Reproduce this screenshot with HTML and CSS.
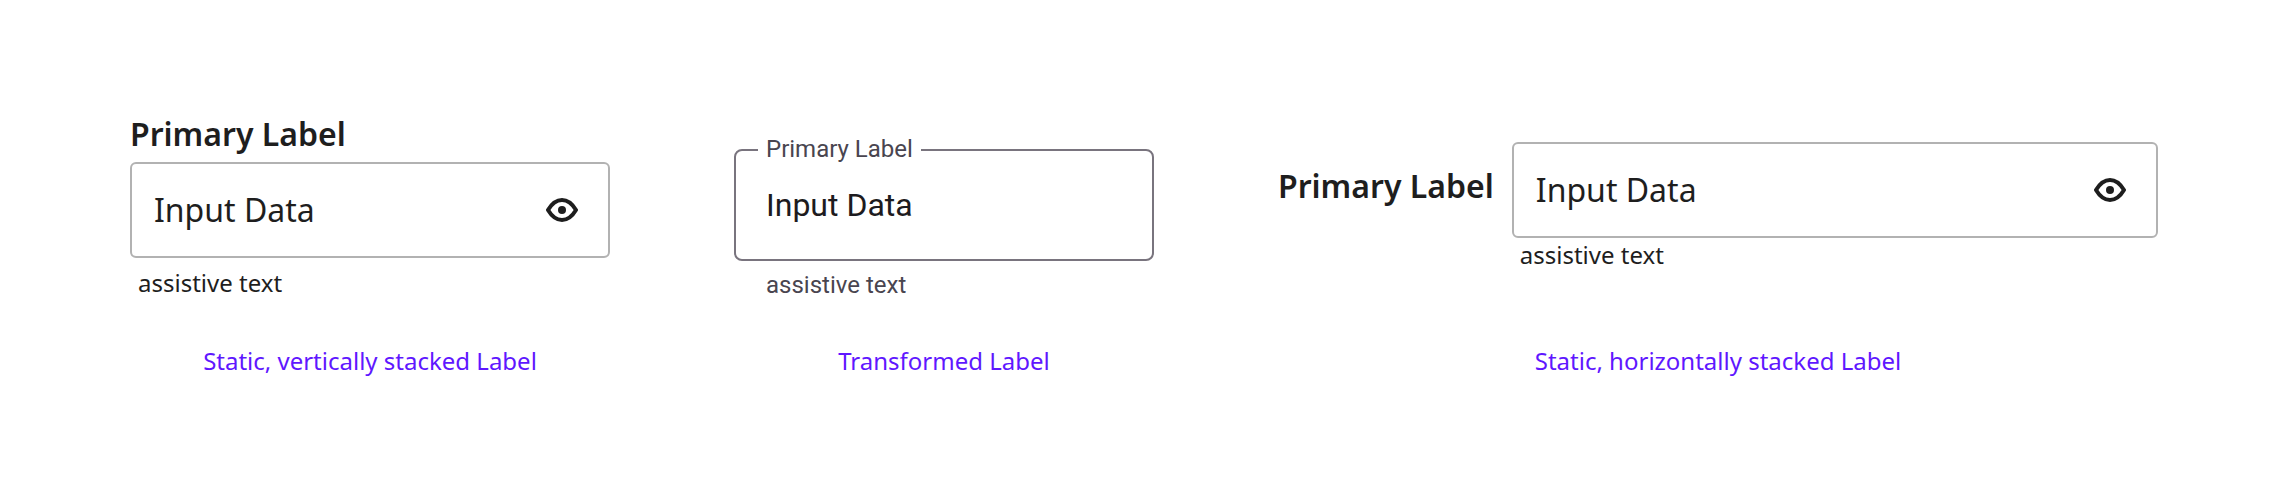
FILE: index.html
```html
<!DOCTYPE html>
<html lang="en">
<head>
<meta charset="utf-8">
<title>Text field labels</title>
<link rel="stylesheet" href="styles.css">
</head>
<body>
<main class="examples">
  <figure class="example">
    <div class="field field-stacked">
      <label class="label" for="stacked">Primary Label</label>
      <div class="box">
        <input class="input" id="stacked" type="text" value="Input Data" aria-describedby="stacked-help">
        <button class="reveal" type="button" aria-label="Show value">
          <svg class="eye" viewBox="0 0 32 24" aria-hidden="true"><path d="M2 12C5 7 10 2 16 2S27 7 30 12C27 17 22 22 16 22S5 17 2 12Z"/><circle cx="16" cy="12" r="4"/></svg>
        </button>
      </div>
      <p class="assistive" id="stacked-help">assistive text</p>
    </div>
    <figcaption class="caption">Static, vertically stacked Label</figcaption>
  </figure>

  <figure class="example">
    <div class="field field-outlined">
      <div class="box">
        <label class="label" for="outlined">Primary Label</label>
        <input class="input" id="outlined" type="text" value="Input Data" aria-describedby="outlined-help">
      </div>
      <p class="assistive" id="outlined-help">assistive text</p>
    </div>
    <figcaption class="caption">Transformed Label</figcaption>
  </figure>

  <figure class="example">
    <div class="field field-inline">
      <label class="label" for="inline">Primary Label</label>
      <div class="control">
        <div class="box">
          <input class="input" id="inline" type="text" value="Input Data" aria-describedby="inline-help">
          <button class="reveal" type="button" aria-label="Show value">
            <svg class="eye" viewBox="0 0 32 24" aria-hidden="true"><path d="M2 12C5 7 10 2 16 2S27 7 30 12C27 17 22 22 16 22S5 17 2 12Z"/><circle cx="16" cy="12" r="4"/></svg>
          </button>
        </div>
        <p class="assistive" id="inline-help">assistive text</p>
      </div>
    </div>
    <figcaption class="caption">Static, horizontally stacked Label</figcaption>
  </figure>
</main>
</body>
</html>
```
FILE: styles.css
```css
* {
  box-sizing: border-box;
}

body {
  margin: 0;
  background: #fff;
  color: #1e1e1e;
  font-family: "Noto Sans", sans-serif;
  font-size: 24px;
  line-height: 32px;
}

.examples {
  display: grid;
  grid-template-columns: minmax(0, 48fr) minmax(0, 42fr) minmax(0, 88fr);
  grid-template-rows: auto auto;
  column-gap: 124px;
  row-gap: 44px;
  padding: 112px 130px;
}

.example {
  display: grid;
  grid-row: span 2;
  grid-template-columns: minmax(0, 1fr);
  grid-template-rows: subgrid;
  margin: 0;
}

.field {
  display: flex;
  flex-direction: column;
}

.label {
  flex: none;
  font-size: 32px;
  font-weight: 600;
  line-height: 44px;
}

.box {
  position: relative;
  display: flex;
  align-items: center;
  padding: 24px 30px 24px 22px;
  border: 2px solid #b2b2b2;
  border-radius: 6px;
}

.input {
  flex: 1;
  min-width: 0;
  height: 44px;
  padding: 0;
  border: 0;
  outline: 0;
  background: none;
  color: inherit;
  font: inherit;
  font-size: 32px;
  line-height: 44px;
}

.reveal {
  display: flex;
  padding: 0;
  border: 0;
  background: none;
  color: inherit;
  cursor: pointer;
}

.eye {
  width: 32px;
  height: 24px;
  fill: currentColor;
}

.eye path {
  fill: none;
  stroke: currentColor;
  stroke-width: 4;
  stroke-linejoin: round;
}

.assistive {
  margin: 0;
  padding-left: 8px;
}

.caption {
  color: #5f17ff;
  text-align: center;
}

.field-stacked {
  padding-bottom: 2px;
}

.field-stacked .box {
  margin: 6px 0 9px;
}

.field-outlined {
  align-self: end;
  color: #49454f;
  font-family: Roboto, sans-serif;
}

.field-outlined .box {
  padding: 30px;
  margin-bottom: 8px;
  border-color: #79747e;
  border-radius: 8px;
}

.field-outlined .label {
  position: absolute;
  top: -18px;
  left: 22px;
  padding: 0 8px;
  background: #fff;
  font-size: 24px;
  font-weight: 400;
  line-height: 32px;
}

.field-outlined .input {
  height: 48px;
  color: #1d1b20;
}

.field-outlined .assistive {
  padding-left: 32px;
}

.field-inline {
  flex-direction: row;
  align-items: flex-start;
  align-self: center;
  gap: 18px;
}

.field-inline .label {
  padding-top: 22px;
}

.control {
  flex: 1;
  min-width: 0;
}

.control .box {
  margin-bottom: 1px;
}
```
